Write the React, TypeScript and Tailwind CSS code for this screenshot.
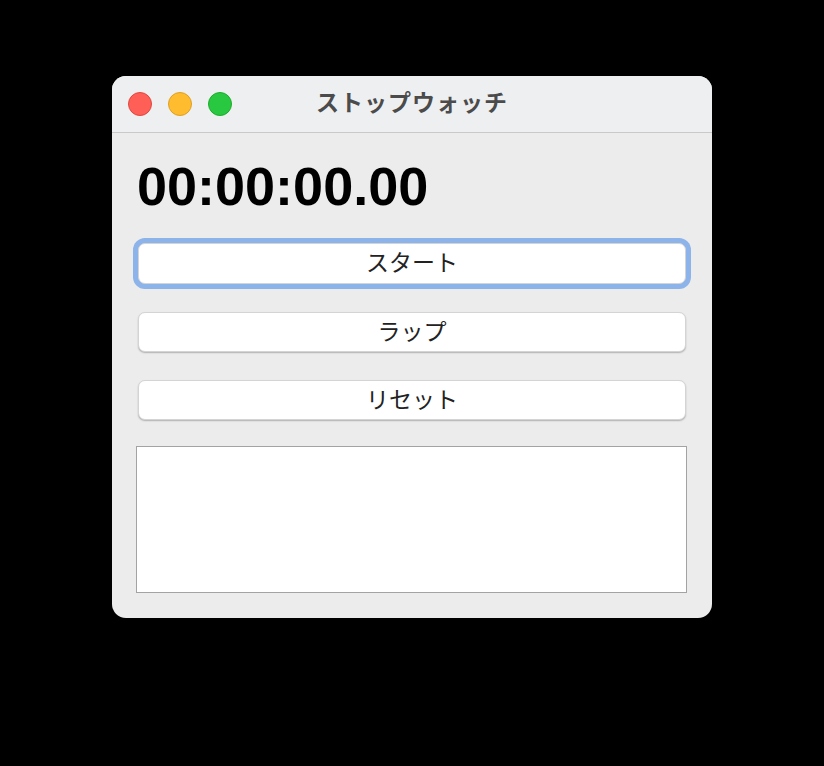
import React from "react";

function TrafficLights() {
  return (
    <div className="flex items-center gap-4">
      <span className="block w-6 h-6 rounded-full bg-[#ff5f57] border border-[#e2463f]" />
      <span className="block w-6 h-6 rounded-full bg-[#febc2e] border border-[#dfa023]" />
      <span className="block w-6 h-6 rounded-full bg-[#28c840] border border-[#1dac2c]" />
    </div>
  );
}

function Btn({ label, focused, className }: { label: string; focused?: boolean; className?: string }) {
  return (
    <button
      className={
        "w-full bg-white rounded-[7px] text-[23px] text-[#222] leading-none pb-[4px] border border-[#d4d4d4] " +
        (focused
          ? "shadow-[0_0_0_5px_#8cb3ea] "
          : "shadow-[0_1px_1.5px_rgba(0,0,0,0.25)] ") +
        (className ?? "")
      }
      style={{ fontFamily: '"Noto Sans CJK JP", "Noto Sans", sans-serif' }}
    >
      {label}
    </button>
  );
}

export default function App() {
  return (
    <div className="w-[824px] h-[766px] bg-black pt-[76px] pl-[112px]">
      <div className="w-[600px] h-[542px] bg-[#ececec] rounded-[14px] overflow-hidden flex flex-col">
        <div className="h-[57px] bg-[#eeeff1] border-b border-[#c9c9c9] relative flex items-center px-4">
          <TrafficLights />
          <div
            className="absolute inset-0 flex items-center justify-center text-[23px] font-bold text-[#4b4b4b] tracking-[1px] pb-[5px]"
            style={{ fontFamily: '"Noto Sans CJK JP", sans-serif' }}
          >
            ストップウォッチ
          </div>
        </div>
        <div className="flex flex-col px-[26px] pt-[26px]">
          <div
            className="text-[54px] leading-[54px] font-bold text-black -ml-[1px]"
            style={{ fontFamily: '"Liberation Sans", Arial, sans-serif' }}
          >
            00:00:00.00
          </div>
          <Btn label="スタート" focused className="mt-[30px] h-[41px]" />
          <Btn label="ラップ" className="mt-[28px] h-[40px]" />
          <Btn label="リセット" className="mt-[28px] h-[40px]" />
          <div className="mt-[26px] -ml-[2px] -mr-[1px] h-[147px] bg-white border border-[#a3a3a3]" />
        </div>
      </div>
    </div>
  );
}
